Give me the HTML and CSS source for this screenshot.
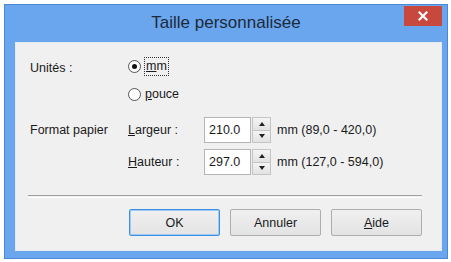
FILE: index.html
```html
<!DOCTYPE html>
<html lang="fr">
<head>
<meta charset="utf-8">
<title>Taille personnalisée</title>
<link rel="stylesheet" href="styles.css">
</head>
<body>
<div class="window">
  <div class="titlebar">
    <span class="title">Taille personnalisée</span>
    <button class="close" aria-label="Fermer">
      <svg width="10" height="10" viewBox="0 0 10 10"><path d="M1.5 1.5 L8.5 8.5 M8.5 1.5 L1.5 8.5" stroke="#fff" stroke-width="2.2" stroke-linecap="square"/></svg>
    </button>
  </div>
  <div class="client">
    <div class="form">
      <div class="label units-label">Unités :</div>
      <div class="radios">
        <div class="radio-item"><span class="radio checked"></span><span class="focus"><u>m</u>m</span></div>
        <div class="radio-item"><span class="radio"></span><span class="radio-text"><u>p</u>ouce</span></div>
      </div>
      <div class="label format-label">Format papier</div>
      <div class="dims">
        <div class="dim-row">
          <span class="dim-label"><u>L</u>argeur :</span>
          <span class="input">210.0</span>
          <span class="spin"><span class="spin-btn"><span class="tri up"></span></span><span class="spin-btn"><span class="tri down"></span></span></span>
          <span class="range">mm (89,0 - 420,0)</span>
        </div>
        <div class="dim-row">
          <span class="dim-label"><u>H</u>auteur :</span>
          <span class="input">297.0</span>
          <span class="spin"><span class="spin-btn"><span class="tri up"></span></span><span class="spin-btn"><span class="tri down"></span></span></span>
          <span class="range">mm (127,0 - 594,0)</span>
        </div>
      </div>
    </div>
    <div class="sep"></div>
    <div class="buttons">
      <button class="btn default">OK</button>
      <button class="btn">Annuler</button>
      <button class="btn"><u>A</u>ide</button>
    </div>
  </div>
</div>
</body>
</html>
```
FILE: styles.css
```css
html, body {
  margin: 0;
  padding: 0;
  background: #ffffff;
}
body {
  font-family: "Liberation Sans", Arial, sans-serif;
  font-size: 12.5px;
  color: #1a1a1a;
}
.window {
  margin: 4px 0 0 4px;
  width: 444px;
  height: 255px;
  box-sizing: border-box;
  background: #6aa6ee;
  border: 1px solid #4c88d6;
  display: flex;
  flex-direction: column;
}
.titlebar {
  height: 37px;
  flex: none;
  display: grid;
  grid-template-columns: 1fr auto 1fr;
}
.title {
  grid-column: 2;
  font-size: 17px;
  line-height: 36px;
  color: #1d2a3a;
  white-space: nowrap;
}
.close {
  grid-column: 3;
  justify-self: end;
  align-self: start;
  margin: 1px 5px 0 0;
  width: 38px;
  height: 20px;
  padding: 0;
  border: none;
  background: #c9483e;
  display: flex;
  align-items: center;
  justify-content: center;
}
.client {
  flex: 1;
  margin: 0 5px 7px 10px;
  background: #f0f0f0;
  box-shadow: inset 0 0 0 1px #e4e9f0;
  padding: 14px 20px 15px 15px;
  display: flex;
  flex-direction: column;
}
.form {
  display: grid;
  grid-template-columns: 98px 1fr;
  row-gap: 13px;
}
.label {
  white-space: nowrap;
}
.units-label {
  padding-top: 5px;
}
.format-label {
  line-height: 26px;
}
.radios {
  display: flex;
  flex-direction: column;
  gap: 8px;
}
.radio-item {
  height: 20px;
  display: flex;
  align-items: center;
  gap: 4px;
}
.radio {
  width: 13px;
  height: 13px;
  box-sizing: border-box;
  border-radius: 50%;
  border: 1px solid #555;
  background: #fff;
  display: flex;
  align-items: center;
  justify-content: center;
}
.radio.checked::after {
  content: "";
  width: 5px;
  height: 5px;
  border-radius: 50%;
  background: #111;
}
.focus {
  outline: 1px dotted #333;
  padding: 1px 1px 2px;
  line-height: 14px;
}
.dims {
  display: flex;
  flex-direction: column;
  gap: 6px;
}
.dim-row {
  display: flex;
  align-items: center;
  height: 26px;
}
.dim-label {
  width: 76px;
  white-space: nowrap;
}
.input {
  width: 47px;
  height: 26px;
  box-sizing: border-box;
  border: 1px solid #b5b5b5;
  background: #fff;
  padding-left: 4px;
  line-height: 24px;
}
.spin {
  margin-left: 1px;
  width: 19px;
  height: 26px;
  display: flex;
  flex-direction: column;
}
.spin-btn {
  flex: 1;
  box-sizing: border-box;
  border: 1px solid #c4c4c4;
  background: linear-gradient(#f4f4f4, #e2e2e2);
  display: flex;
  align-items: center;
  justify-content: center;
}
.spin-btn + .spin-btn {
  border-top: none;
}
.tri {
  width: 0;
  height: 0;
  border-left: 3px solid transparent;
  border-right: 3px solid transparent;
}
.tri.up {
  border-bottom: 4px solid #222;
}
.tri.down {
  border-top: 4px solid #222;
}
.range {
  margin-left: 6px;
  white-space: nowrap;
}
.sep {
  margin: 20px 0 0 -2px;
  height: 1px;
  border-top: 1px solid #a0a0a0;
  border-bottom: 1px solid #ffffff;
}
.buttons {
  margin-top: 11px;
  display: flex;
  justify-content: flex-end;
  gap: 10px;
}
.btn {
  width: 91px;
  height: 27px;
  padding: 0;
  font: inherit;
  color: #1a1a1a;
  border: 1px solid #adadad;
  border-radius: 2px;
  background: linear-gradient(#f0f0f0, #e3e3e3);
}
.btn.default {
  border-color: #3c8fe0;
  box-shadow: inset 0 0 0 1px #9fcaf3;
}
```
